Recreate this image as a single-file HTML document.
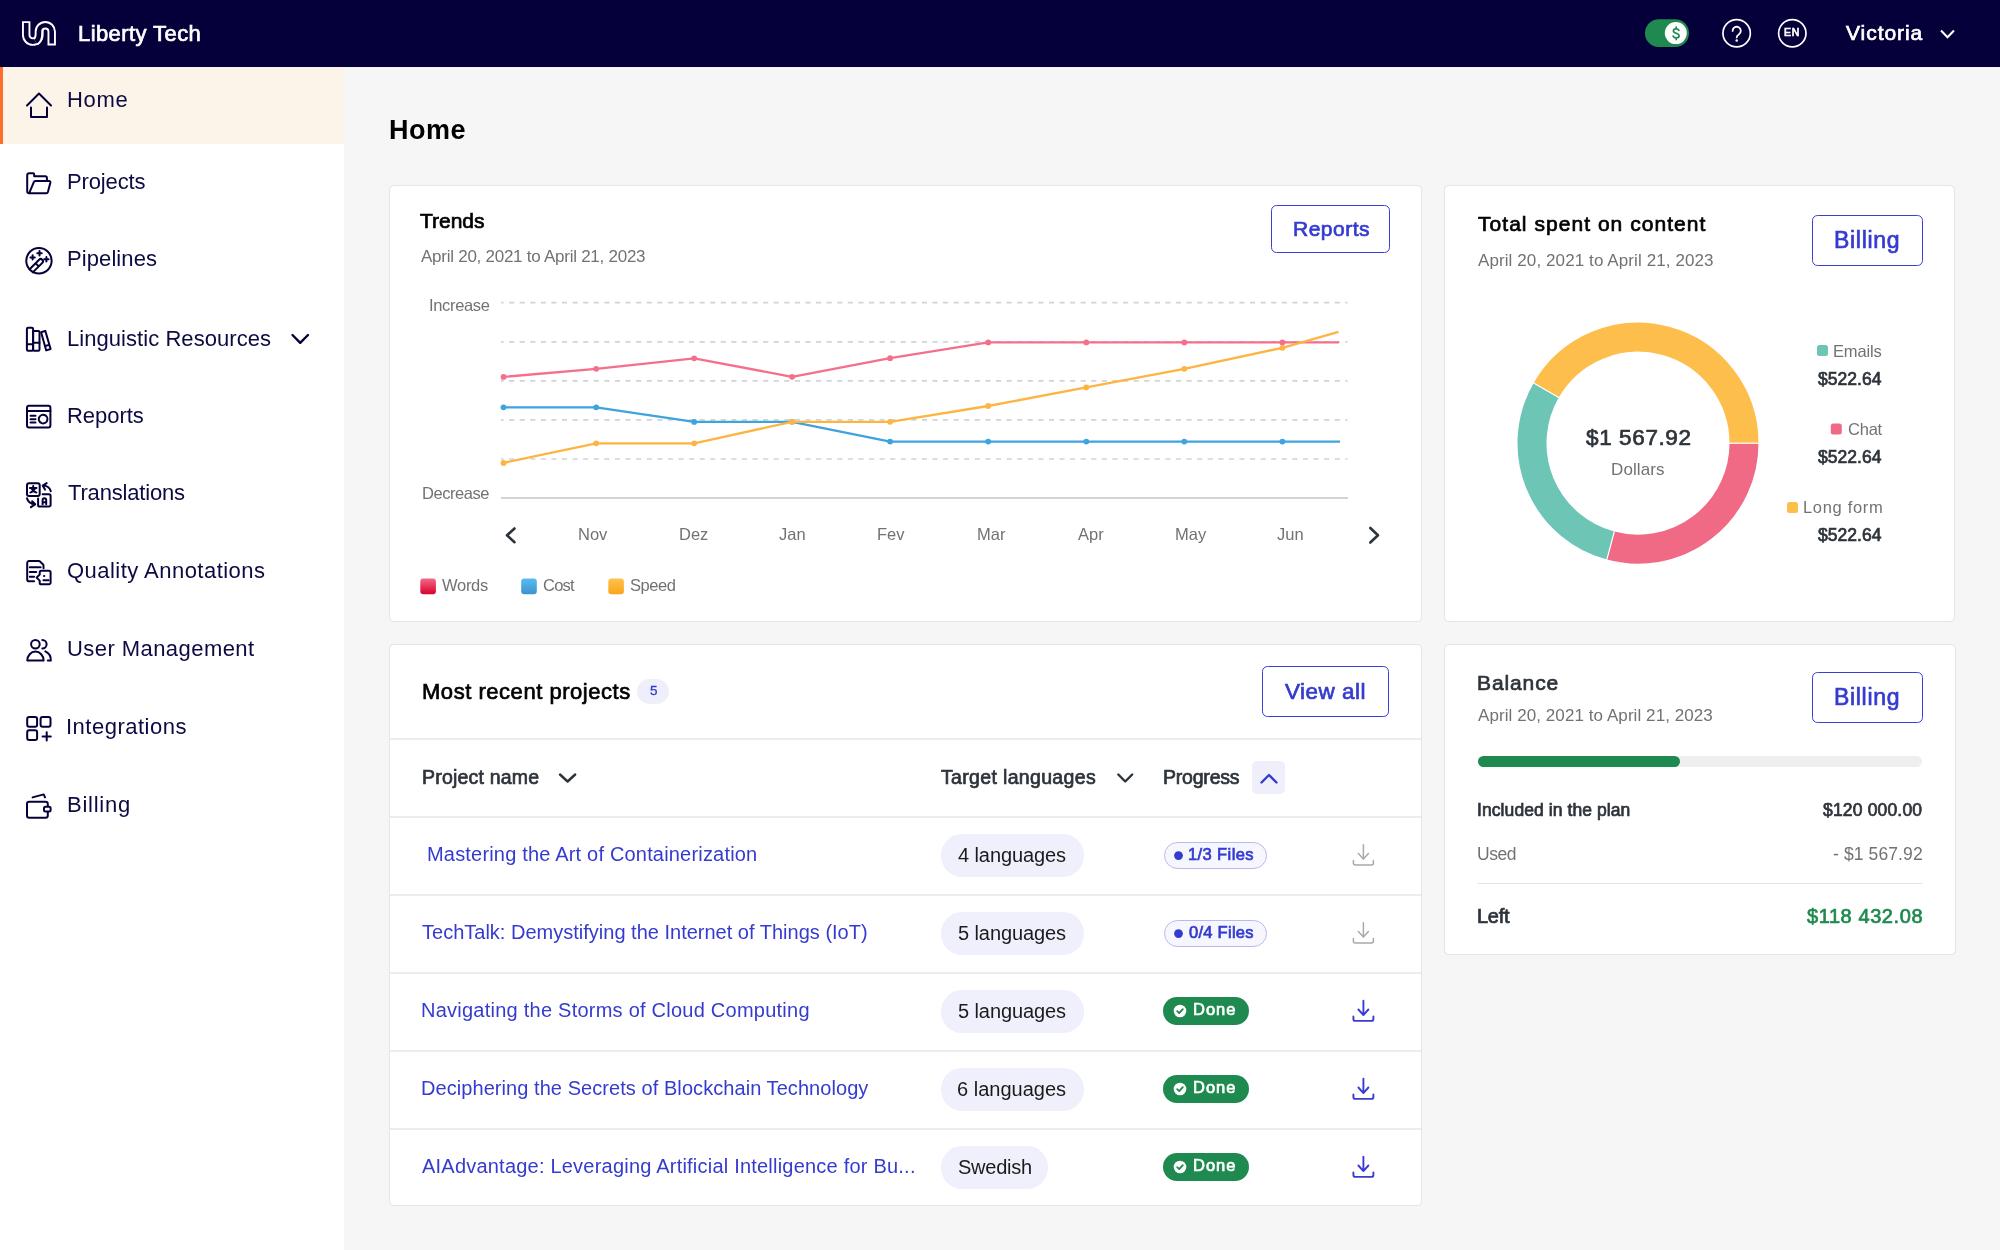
<!DOCTYPE html>
<html><head><meta charset="utf-8"><title>Liberty Tech - Home</title>
<style>
html,body{margin:0;padding:0;}
body{width:2000px;height:1250px;overflow:hidden;position:relative;background:#f6f6f6;font-family:"Liberation Sans", sans-serif;}
.t{position:absolute;white-space:nowrap;line-height:1;-webkit-font-smoothing:antialiased;will-change:transform;}
svg.ov{position:absolute;left:0;top:0;}
</style></head><body>
<div style="position:absolute;left:0px;top:0px;width:2000px;height:67px;background:#05003a;"></div><div style="position:absolute;left:0px;top:67px;width:344px;height:1183px;background:#fff;"></div><div style="position:absolute;left:0px;top:67px;width:344px;height:77px;background:#fcf3e9;"></div><div style="position:absolute;left:0px;top:67px;width:3px;height:77px;background:#fd6e2c;"></div><div style="position:absolute;left:389px;top:185px;width:1033px;height:437px;background:#fff;border:1px solid #e6e6e6;border-radius:5px;box-sizing:border-box;box-shadow:0 0 1px rgba(0,0,0,0.05);"></div><div style="position:absolute;left:1444px;top:185px;width:511px;height:437px;background:#fff;border:1px solid #e6e6e6;border-radius:5px;box-sizing:border-box;box-shadow:0 0 1px rgba(0,0,0,0.05);"></div><div style="position:absolute;left:389px;top:644px;width:1033px;height:562px;background:#fff;border:1px solid #e6e6e6;border-radius:5px;box-sizing:border-box;box-shadow:0 0 1px rgba(0,0,0,0.05);"></div><div style="position:absolute;left:1444px;top:644px;width:512px;height:311px;background:#fff;border:1px solid #e6e6e6;border-radius:5px;box-sizing:border-box;box-shadow:0 0 1px rgba(0,0,0,0.05);"></div><div style="position:absolute;left:1271px;top:205px;width:119px;height:48px;border:1.6px solid #3a3fd6;border-radius:5.5px;box-sizing:border-box;"></div><div style="position:absolute;left:1812px;top:215px;width:111px;height:51px;border:1.6px solid #3a3fd6;border-radius:5.5px;box-sizing:border-box;"></div><div style="position:absolute;left:637.4px;top:678.5px;width:31.7px;height:25.2px;background:#efeffc;border-radius:13px;"></div><div style="position:absolute;left:1262px;top:666px;width:127px;height:51px;border:1.6px solid #3a3fd6;border-radius:5.5px;box-sizing:border-box;"></div><div style="position:absolute;left:390px;top:738px;width:1031px;height:2px;background:#ececec;"></div><div style="position:absolute;left:390px;top:816px;width:1031px;height:2px;background:#ececec;"></div><div style="position:absolute;left:390px;top:894px;width:1031px;height:2px;background:#ececec;"></div><div style="position:absolute;left:390px;top:972px;width:1031px;height:2px;background:#ececec;"></div><div style="position:absolute;left:390px;top:1050px;width:1031px;height:2px;background:#ececec;"></div><div style="position:absolute;left:390px;top:1128px;width:1031px;height:2px;background:#ececec;"></div><div style="position:absolute;left:1252.4px;top:761px;width:33px;height:33px;background:#efeffc;border-radius:5px;"></div><div style="position:absolute;left:941px;top:834.3px;width:143px;height:42.4px;background:#f0f0fc;border-radius:21px;"></div><div style="position:absolute;left:1163.6px;top:841.6999999999999px;width:103.4px;height:27.4px;background:#f6f6fe;border:1.3px solid #b9b9f0;border-radius:14px;box-sizing:border-box;"></div><div style="position:absolute;left:941px;top:912.3px;width:143px;height:42.4px;background:#f0f0fc;border-radius:21px;"></div><div style="position:absolute;left:1163.6px;top:919.6999999999999px;width:103.4px;height:27.4px;background:#f6f6fe;border:1.3px solid #b9b9f0;border-radius:14px;box-sizing:border-box;"></div><div style="position:absolute;left:941px;top:990.3px;width:143px;height:42.4px;background:#f0f0fc;border-radius:21px;"></div><div style="position:absolute;left:1163.4px;top:997.0px;width:85.6px;height:28px;background:#1f8a4f;border-radius:14px;"></div><div style="position:absolute;left:941px;top:1068.3px;width:143px;height:42.4px;background:#f0f0fc;border-radius:21px;"></div><div style="position:absolute;left:1163.4px;top:1075.0px;width:85.6px;height:28px;background:#1f8a4f;border-radius:14px;"></div><div style="position:absolute;left:941px;top:1146.3px;width:107px;height:42.4px;background:#f0f0fc;border-radius:21px;"></div><div style="position:absolute;left:1163.4px;top:1153.0px;width:85.6px;height:28px;background:#1f8a4f;border-radius:14px;"></div><div style="position:absolute;left:1812px;top:672px;width:111px;height:51px;border:1.6px solid #3a3fd6;border-radius:5.5px;box-sizing:border-box;"></div><div style="position:absolute;left:1477.5px;top:756px;width:444.5px;height:11px;background:#efefef;border-radius:6px;"></div><div style="position:absolute;left:1477.5px;top:756px;width:202.5px;height:11px;background:#1f8a4f;border-radius:6px;"></div><div style="position:absolute;left:1477.5px;top:882.5px;width:444.5px;height:1.5px;background:#e3e3e3;"></div>
<svg class="ov" width="2000" height="1250" viewBox="0 0 2000 1250">
<path d="M26.2,21.2 V35 A6.6,6.6 0 0 0 39.4,35 V29" fill="none" stroke="#fff" stroke-width="8.4"/><path d="M26.2,23.1 V35 A6.6,6.6 0 0 0 39.4,35 V29" fill="none" stroke="#05003a" stroke-width="4.6"/><path d="M35.6,41.6 Q38.9,39.6 38.9,34 V31.6 A6.4,6.4 0 0 1 51.7,31.6 V45.4" fill="none" stroke="#fff" stroke-width="8.4"/><path d="M35.6,41.6 Q38.9,39.6 38.9,34 V31.6 A6.4,6.4 0 0 1 51.7,31.6 V43.5" fill="none" stroke="#05003a" stroke-width="4.6"/><rect x="1645" y="19.3" width="44" height="27.7" rx="13.85" fill="#1f8a4f"/><circle cx="1675.8" cy="33.1" r="11" fill="#fff"/><path d="M1678.9,30.4 C1678.4,29.2 1677.4,28.8 1676.2,28.8 C1674.6,28.8 1673.4,29.7 1673.4,31 C1673.4,33.9 1679.1,32.7 1679.1,35.8 C1679.1,37.1 1677.9,37.9 1676.2,37.9 C1674.8,37.9 1673.6,37.3 1673.1,36.1 M1676.2,27.2 V28.8 M1676.2,37.9 V39.6" fill="none" stroke="#1f8a4f" stroke-width="1.7" stroke-linecap="round"/><circle cx="1736.65" cy="33.25" r="13.7" fill="none" stroke="#fff" stroke-width="1.7"/><path d="M1732.6,30.9 A4.1,4.1 0 1 1 1738.8,34.4 C1737.4,35.2 1736.7,35.9 1736.7,37.4" fill="none" stroke="#fff" stroke-width="1.8" stroke-linecap="round"/><circle cx="1736.7" cy="40.4" r="1.25" fill="#fff"/><circle cx="1792.3" cy="33.25" r="13.7" fill="none" stroke="#fff" stroke-width="1.7"/><polyline points="1941,30.5 1947.5,37.2 1954,30.5" fill="none" stroke="#fff" stroke-width="2"/><polyline points="292.5,335 300.2,342.8 308,335" fill="none" stroke="#05003a" stroke-width="2.4" stroke-linecap="round" stroke-linejoin="round"/><polyline points="27,105.5 39,93.5 51,105.5" fill="none" stroke="#05003a" stroke-width="2" stroke-linejoin="round" stroke-linecap="round" stroke-linecap="butt"/><polyline points="31,107.5 31,117 47,117 47,107.5" fill="none" stroke="#05003a" stroke-width="2" stroke-linejoin="round" stroke-linecap="round" stroke-linejoin="miter" stroke-linecap="butt"/><path d="M29.2,193.2 A2,2 0 0 1 27.2,191.2 V175.2 A2,2 0 0 1 29.2,173.2 H33 A1.2,1.2 0 0 1 34.2,174.4 V176.2 H45.3 A1.6,1.6 0 0 1 46.9,177.8 V180.6" fill="none" stroke="#05003a" stroke-width="2" stroke-linejoin="round" stroke-linecap="round" stroke-width="1.9"/><path d="M35.3,181 H49.2 A1.3,1.3 0 0 1 50.4,182.6 L47.9,192 A1.7,1.7 0 0 1 46.3,193.2 H29.2 L33.8,182.2 A1.6,1.6 0 0 1 35.3,181 Z" fill="none" stroke="#05003a" stroke-width="2" stroke-linejoin="round" stroke-linecap="round" stroke-width="1.9"/><circle cx="38.95" cy="260.8" r="12.7" fill="none" stroke="#05003a" stroke-width="2" stroke-linejoin="round" stroke-linecap="round"/><path d="M29.6,269.2 L39.1,259.7 A2.26,2.26 0 0 1 42.3,262.9 L32.8,272.4 M35.6,263.2 L38.8,266.4" fill="none" stroke="#05003a" stroke-width="2" stroke-linejoin="round" stroke-linecap="round"/><path d="M32.6,255.2 V259.6 M30.4,257.4 H34.8 M39.5,251.1 V255.5 M37.3,253.3 H41.7 M46.4,257 V261.4 M44.2,259.2 H48.6" fill="none" stroke="#05003a" stroke-width="2" stroke-linejoin="round" stroke-linecap="round" stroke-width="1.6"/><rect x="26.9" y="327.7" width="6.2" height="23" rx="1.2" fill="none" stroke="#05003a" stroke-width="2" stroke-linejoin="round" stroke-linecap="round"/><rect x="33.1" y="331" width="6.4" height="19.7" rx="1.2" fill="none" stroke="#05003a" stroke-width="2" stroke-linejoin="round" stroke-linecap="round"/><path d="M26.9,344.3 H33.1 M33.1,342.7 H39.5" fill="none" stroke="#05003a" stroke-width="2" stroke-linejoin="round" stroke-linecap="round"/><path d="M41.1,332.3 L45.3,330.9 L50.6,349 L46.2,350.4 Z M44.9,346.1 L49.4,344.7" fill="none" stroke="#05003a" stroke-width="2" stroke-linejoin="round" stroke-linecap="round"/><rect x="27" y="405.8" width="23.4" height="21.6" rx="2" fill="none" stroke="#05003a" stroke-width="2" stroke-linejoin="round" stroke-linecap="round"/><path d="M27,410.9 H50.4 M30.5,415.7 H35.5 M30.5,419.2 H35.5 M30.5,422.6 H35.5" fill="none" stroke="#05003a" stroke-width="2" stroke-linejoin="round" stroke-linecap="round"/><circle cx="43.1" cy="419.1" r="4.3" fill="none" stroke="#05003a" stroke-width="2" stroke-linejoin="round" stroke-linecap="round" stroke-width="1.9" stroke-linecap="butt" stroke-dasharray="8 1.0" transform="rotate(-70 43.1 419.1)"/><rect x="27" y="483.3" width="12.7" height="12.6" rx="2" fill="none" stroke="#05003a" stroke-width="2" stroke-linejoin="round" stroke-linecap="round" stroke-width="1.8"/><path d="M29.9,488 H36.5 M33.2,486 V488 M30.3,492.6 Q33.6,491.8 35.2,488.2 M31.5,488.2 Q32.8,491.6 36.4,492.6" fill="none" stroke="#05003a" stroke-width="2" stroke-linejoin="round" stroke-linecap="round" stroke-width="1.3"/><path d="M42.6,494.3 H49 A1.6,1.6 0 0 1 50.6,495.9 V504.9 A1.6,1.6 0 0 1 49,506.5 H39.7 A1.6,1.6 0 0 1 38.1,504.9 V498.6" fill="none" stroke="#05003a" stroke-width="2" stroke-linejoin="round" stroke-linecap="round" stroke-width="1.8"/><path d="M42.6,504.2 V500.2 A1.8,2 0 0 1 46.2,500.2 V504.2 M42.6,502.2 H46.2" fill="none" stroke="#05003a" stroke-width="2" stroke-linejoin="round" stroke-linecap="round" stroke-width="1.3"/><path d="M50.8,491.2 Q49.2,485.8 42.7,485.6 M42.7,485.6 L46.7,483.1 M42.7,485.6 L45,489.6" fill="none" stroke="#05003a" stroke-width="2" stroke-linejoin="round" stroke-linecap="round" stroke-width="1.8"/><path d="M27,498.3 Q28.4,504 35.2,504.3 M35.2,504.3 L32.1,501.2 M35.2,504.3 L30.9,507.1" fill="none" stroke="#05003a" stroke-width="2" stroke-linejoin="round" stroke-linecap="round" stroke-width="1.8"/><path d="M43.5,568.3 V565.4 A1.5,1.5 0 0 0 43.1,564.4 L40,561.5 A1.5,1.5 0 0 0 39,561.1 H29 A1.8,1.8 0 0 0 27.2,562.9 V579.4 A1.8,1.8 0 0 0 29,581.2 H34.1" fill="none" stroke="#05003a" stroke-width="2" stroke-linejoin="round" stroke-linecap="round" stroke-width="1.8"/><path d="M29.8,567.3 H40.6 M29.8,572 H36.2 M29.8,576.8 H34.1" fill="none" stroke="#05003a" stroke-width="2" stroke-linejoin="round" stroke-linecap="round" stroke-width="1.8"/><path d="M41.3,570.8 H49 A1.6,1.6 0 0 1 50.6,572.4 V582.7 A1.6,1.6 0 0 1 49,584.3 H41.3 A1.6,1.6 0 0 1 39.7,582.7 V580.6 L36.6,577.6 L39.7,574.5 V572.4 A1.6,1.6 0 0 1 41.3,570.8 Z" fill="none" stroke="#05003a" stroke-width="2" stroke-linejoin="round" stroke-linecap="round" stroke-width="1.8"/><path d="M44,576.1 H44.3 M43.4,580.3 H48.6" fill="none" stroke="#05003a" stroke-width="2" stroke-linejoin="round" stroke-linecap="round" stroke-width="1.8"/><circle cx="35.4" cy="644.3" r="4.3" fill="none" stroke="#05003a" stroke-width="2" stroke-linejoin="round" stroke-linecap="round" stroke-width="1.9"/><path d="M27.3,660.6 A8.15,9 0 0 1 43.6,660.6 Z" fill="none" stroke="#05003a" stroke-width="2" stroke-linejoin="round" stroke-linecap="round" stroke-width="1.9"/><path d="M42.3,640 A4.3,4.3 0 0 1 42.3,648.6 M45.3,651.4 A9.5,9.5 0 0 1 50.8,660.6 H47.8" fill="none" stroke="#05003a" stroke-width="2" stroke-linejoin="round" stroke-linecap="round" stroke-width="1.9"/><rect x="27.2" y="716.9" width="9.9" height="9.9" rx="2" fill="none" stroke="#05003a" stroke-width="2" stroke-linejoin="round" stroke-linecap="round"/><rect x="40.6" y="716.9" width="9.9" height="9.9" rx="2" fill="none" stroke="#05003a" stroke-width="2" stroke-linejoin="round" stroke-linecap="round"/><rect x="27.2" y="730.2" width="9.9" height="9.9" rx="2" fill="none" stroke="#05003a" stroke-width="2" stroke-linejoin="round" stroke-linecap="round"/><path d="M46.7,732.3 V740.5 M42.6,736.4 H50.8" fill="none" stroke="#05003a" stroke-width="2" stroke-linejoin="round" stroke-linecap="round" stroke-width="2"/><rect x="27" y="801.8" width="20.8" height="15.9" rx="2.2" fill="none" stroke="#05003a" stroke-width="2" stroke-linejoin="round" stroke-linecap="round"/><rect x="44" y="806.8" width="6.6" height="4.6" rx="1.5" fill="#fff" stroke="#05003a" stroke-width="2"/><path d="M32.6,797.4 L43.7,794.4 L45,797.4" fill="none" stroke="#05003a" stroke-width="2" stroke-linejoin="round" stroke-linecap="round"/><line x1="501" y1="302.7" x2="1347.5" y2="302.7" stroke="#d2d3d6" stroke-width="1.7" stroke-dasharray="5.1 5.485" stroke-dashoffset="2.5"/><line x1="501" y1="341.8" x2="1347.5" y2="341.8" stroke="#d2d3d6" stroke-width="1.7" stroke-dasharray="5.1 5.485" stroke-dashoffset="2.5"/><line x1="501" y1="380.9" x2="1347.5" y2="380.9" stroke="#d2d3d6" stroke-width="1.7" stroke-dasharray="5.1 5.485" stroke-dashoffset="2.5"/><line x1="501" y1="419.9" x2="1347.5" y2="419.9" stroke="#d2d3d6" stroke-width="1.7" stroke-dasharray="5.1 5.485" stroke-dashoffset="2.5"/><line x1="501" y1="459" x2="1347.5" y2="459" stroke="#d2d3d6" stroke-width="1.7" stroke-dasharray="5.1 5.485" stroke-dashoffset="2.5"/><line x1="501" y1="498" x2="1348" y2="498" stroke="#d3d3d3" stroke-width="2"/><polyline points="503.5,376.9 596.2,368.8 694.2,358.3 792.1,376.8 890.1,358.2 988.2,342.4 1086.3,342.4 1184.3,342.4 1282.4,342.4 1339,342.4" fill="none" stroke="#f56f8a" stroke-width="2.3" stroke-linejoin="round"/><circle cx="503.5" cy="376.9" r="2.9" fill="#f56f8a"/><circle cx="596.2" cy="368.8" r="2.9" fill="#f56f8a"/><circle cx="694.2" cy="358.3" r="2.9" fill="#f56f8a"/><circle cx="792.1" cy="376.8" r="2.9" fill="#f56f8a"/><circle cx="890.1" cy="358.2" r="2.9" fill="#f56f8a"/><circle cx="988.2" cy="342.4" r="2.9" fill="#f56f8a"/><circle cx="1086.3" cy="342.4" r="2.9" fill="#f56f8a"/><circle cx="1184.3" cy="342.4" r="2.9" fill="#f56f8a"/><circle cx="1282.4" cy="342.4" r="2.9" fill="#f56f8a"/><polyline points="503.5,407.3 596.2,407.3 694.2,421.9 792.1,421.8 890.1,441.6 988.2,441.6 1086.3,441.6 1184.3,441.6 1282.4,441.6 1340,441.6" fill="none" stroke="#3fa3dd" stroke-width="2.3" stroke-linejoin="round"/><circle cx="503.5" cy="407.3" r="2.9" fill="#3fa3dd"/><circle cx="596.2" cy="407.3" r="2.9" fill="#3fa3dd"/><circle cx="694.2" cy="421.9" r="2.9" fill="#3fa3dd"/><circle cx="792.1" cy="421.8" r="2.9" fill="#3fa3dd"/><circle cx="890.1" cy="441.6" r="2.9" fill="#3fa3dd"/><circle cx="988.2" cy="441.6" r="2.9" fill="#3fa3dd"/><circle cx="1086.3" cy="441.6" r="2.9" fill="#3fa3dd"/><circle cx="1184.3" cy="441.6" r="2.9" fill="#3fa3dd"/><circle cx="1282.4" cy="441.6" r="2.9" fill="#3fa3dd"/><polyline points="503.5,462.9 596.2,443.3 694.2,443.3 792.1,421.8 890.1,421.8 988.2,406 1086.3,387.4 1184.3,368.8 1282.4,347.8 1338.5,331.9" fill="none" stroke="#fdb440" stroke-width="2.3" stroke-linejoin="round"/><circle cx="503.5" cy="462.9" r="2.9" fill="#fdb440"/><circle cx="596.2" cy="443.3" r="2.9" fill="#fdb440"/><circle cx="694.2" cy="443.3" r="2.9" fill="#fdb440"/><circle cx="792.1" cy="421.8" r="2.9" fill="#fdb440"/><circle cx="890.1" cy="421.8" r="2.9" fill="#fdb440"/><circle cx="988.2" cy="406" r="2.9" fill="#fdb440"/><circle cx="1086.3" cy="387.4" r="2.9" fill="#fdb440"/><circle cx="1184.3" cy="368.8" r="2.9" fill="#fdb440"/><circle cx="1282.4" cy="347.8" r="2.9" fill="#fdb440"/><polyline points="514.5,528.5 507,535.3 514.5,542.2" fill="none" stroke="#2d333a" stroke-width="2.6" stroke-linecap="round" stroke-linejoin="round"/><polyline points="1370.3,528 1378,535.3 1370.3,542.5" fill="none" stroke="#2d333a" stroke-width="2.6" stroke-linecap="round" stroke-linejoin="round"/><defs><linearGradient id="gw" x1="0" y1="0" x2="0" y2="1"><stop offset="0" stop-color="#f26a85"/><stop offset="1" stop-color="#d9002c"/></linearGradient><linearGradient id="gc" x1="0" y1="0" x2="0" y2="1"><stop offset="0" stop-color="#5bbaf2"/><stop offset="1" stop-color="#3b95cb"/></linearGradient><linearGradient id="gs" x1="0" y1="0" x2="0" y2="1"><stop offset="0" stop-color="#fec34c"/><stop offset="1" stop-color="#f9a51d"/></linearGradient></defs><rect x="420.3" y="578.6" width="15.6" height="15.6" rx="3" fill="url(#gw)"/><rect x="521.2" y="578.6" width="15.6" height="15.6" rx="3" fill="url(#gc)"/><rect x="608.3" y="578.6" width="15.6" height="15.6" rx="3" fill="url(#gs)"/><path d="M1546.20,390.20 A106,106 0 0 1 1744.00,443.20" fill="none" stroke="#fdbe4c" stroke-width="29"/><path d="M1744.00,443.20 A106,106 0 0 1 1610.57,545.59" fill="none" stroke="#f06a86" stroke-width="29"/><path d="M1610.57,545.59 A106,106 0 0 1 1546.20,390.20" fill="none" stroke="#6dc6b5" stroke-width="29"/><line x1="1559.62" y1="397.95" x2="1532.78" y2="382.45" stroke="#fff" stroke-width="1.2"/><line x1="1728.50" y1="443.20" x2="1759.50" y2="443.20" stroke="#fff" stroke-width="1.2"/><line x1="1614.58" y1="530.62" x2="1606.55" y2="560.56" stroke="#fff" stroke-width="1.2"/><rect x="1817" y="345" width="11" height="11" rx="2.5" fill="#6dc6b5"/><rect x="1830.8" y="423.4" width="11" height="11" rx="2.5" fill="#f06a86"/><rect x="1787" y="502" width="11" height="11" rx="2.5" fill="#fdbe4c"/><polyline points="560,774.5 567.6,781.5 575.2,774.5" fill="none" stroke="#2d333a" stroke-width="2.4" stroke-linecap="round" stroke-linejoin="round"/><polyline points="1118.3,774.5 1125.2,781.5 1132.2,774.5" fill="none" stroke="#2d333a" stroke-width="2.4" stroke-linecap="round" stroke-linejoin="round"/><polyline points="1261.5,782.5 1269,775 1276.5,782.5" fill="none" stroke="#353bcf" stroke-width="2.4" stroke-linecap="round" stroke-linejoin="round"/><circle cx="1178.5" cy="855.5999999999999" r="4.4" fill="#353bcf"/><path d="M1363.4,844.8 V859.0999999999999 M1358.4,853.5 L1363.4,859.0999999999999 L1368.4,853.5" fill="none" stroke="#a9a9a9" stroke-width="1.5" stroke-linecap="round" stroke-linejoin="round"/><path d="M1353.4,860.5 V862.9 A2,2 0 0 0 1355.4,864.9 H1371.4 A2,2 0 0 0 1373.4,862.9 V860.5" fill="none" stroke="#a9a9a9" stroke-width="1.5" stroke-linecap="round" stroke-linejoin="round"/><circle cx="1178.5" cy="933.5999999999999" r="4.4" fill="#353bcf"/><path d="M1363.4,922.8 V937.0999999999999 M1358.4,931.5 L1363.4,937.0999999999999 L1368.4,931.5" fill="none" stroke="#a9a9a9" stroke-width="1.5" stroke-linecap="round" stroke-linejoin="round"/><path d="M1353.4,938.5 V940.9 A2,2 0 0 0 1355.4,942.9 H1371.4 A2,2 0 0 0 1373.4,940.9 V938.5" fill="none" stroke="#a9a9a9" stroke-width="1.5" stroke-linecap="round" stroke-linejoin="round"/><circle cx="1180" cy="1011.0" r="6.3" fill="#fff"/><polyline points="1177.2,1011.0999999999999 1179.2,1013.0999999999999 1182.8,1009.0999999999999" fill="none" stroke="#1f8a4f" stroke-width="1.8" stroke-linecap="round" stroke-linejoin="round"/><path d="M1363.4,1000.8 V1015.0999999999999 M1358.4,1009.5 L1363.4,1015.0999999999999 L1368.4,1009.5" fill="none" stroke="#3b3bd2" stroke-width="1.9" stroke-linecap="round" stroke-linejoin="round"/><path d="M1353.4,1016.5 V1018.9 A2,2 0 0 0 1355.4,1020.9 H1371.4 A2,2 0 0 0 1373.4,1018.9 V1016.5" fill="none" stroke="#3b3bd2" stroke-width="1.9" stroke-linecap="round" stroke-linejoin="round"/><circle cx="1180" cy="1089.0" r="6.3" fill="#fff"/><polyline points="1177.2,1089.1 1179.2,1091.1 1182.8,1087.1" fill="none" stroke="#1f8a4f" stroke-width="1.8" stroke-linecap="round" stroke-linejoin="round"/><path d="M1363.4,1078.8 V1093.1 M1358.4,1087.5 L1363.4,1093.1 L1368.4,1087.5" fill="none" stroke="#3b3bd2" stroke-width="1.9" stroke-linecap="round" stroke-linejoin="round"/><path d="M1353.4,1094.5 V1096.8999999999999 A2,2 0 0 0 1355.4,1098.8999999999999 H1371.4 A2,2 0 0 0 1373.4,1096.8999999999999 V1094.5" fill="none" stroke="#3b3bd2" stroke-width="1.9" stroke-linecap="round" stroke-linejoin="round"/><circle cx="1180" cy="1167.0" r="6.3" fill="#fff"/><polyline points="1177.2,1167.1 1179.2,1169.1 1182.8,1165.1" fill="none" stroke="#1f8a4f" stroke-width="1.8" stroke-linecap="round" stroke-linejoin="round"/><path d="M1363.4,1156.8 V1171.1 M1358.4,1165.5 L1363.4,1171.1 L1368.4,1165.5" fill="none" stroke="#3b3bd2" stroke-width="1.9" stroke-linecap="round" stroke-linejoin="round"/><path d="M1353.4,1172.5 V1174.8999999999999 A2,2 0 0 0 1355.4,1176.8999999999999 H1371.4 A2,2 0 0 0 1373.4,1174.8999999999999 V1172.5" fill="none" stroke="#3b3bd2" stroke-width="1.9" stroke-linecap="round" stroke-linejoin="round"/>
</svg>
<div class="t" style="left:77.75px;top:22.5px;font-size:22px;font-weight:400;color:#fff;letter-spacing:0.420px;-webkit-text-stroke:0.7px #fff;">Liberty Tech</div><div class="t" style="left:1783.50px;top:26.799999999999997px;font-size:10.5px;font-weight:400;color:#fff;letter-spacing:0.697px;-webkit-text-stroke:0.7px #fff;">EN</div><div class="t" style="left:1846.40px;top:22px;font-size:21px;font-weight:400;color:#fff;letter-spacing:0.948px;-webkit-text-stroke:0.7px #fff;">Victoria</div><div class="t" style="left:67.00px;top:88.7px;font-size:22px;font-weight:400;color:#0c0a42;letter-spacing:0.684px;">Home</div><div class="t" style="left:67.00px;top:170.8px;font-size:22px;font-weight:400;color:#0c0a42;letter-spacing:-0.139px;">Projects</div><div class="t" style="left:67.00px;top:248px;font-size:22px;font-weight:400;color:#0c0a42;letter-spacing:0.090px;">Pipelines</div><div class="t" style="left:67.00px;top:328.4px;font-size:22px;font-weight:400;color:#0c0a42;letter-spacing:0.053px;">Linguistic Resources</div><div class="t" style="left:67.00px;top:404.8px;font-size:22px;font-weight:400;color:#0c0a42;letter-spacing:-0.039px;">Reports</div><div class="t" style="left:68.00px;top:482px;font-size:22px;font-weight:400;color:#0c0a42;letter-spacing:-0.183px;">Translations</div><div class="t" style="left:67.00px;top:560px;font-size:22px;font-weight:400;color:#0c0a42;letter-spacing:0.468px;">Quality Annotations</div><div class="t" style="left:67.00px;top:637.8px;font-size:22px;font-weight:400;color:#0c0a42;letter-spacing:0.438px;">User Management</div><div class="t" style="left:66.00px;top:716.3px;font-size:22px;font-weight:400;color:#0c0a42;letter-spacing:0.494px;">Integrations</div><div class="t" style="left:67.00px;top:793.6px;font-size:22px;font-weight:400;color:#0c0a42;letter-spacing:0.757px;">Billing</div><div class="t" style="left:389.00px;top:116.80000000000001px;font-size:27px;font-weight:700;color:#000;letter-spacing:0.500px;">Home</div><div class="t" style="left:420.30px;top:210.1px;font-size:21px;font-weight:400;color:#000;letter-spacing:-0.016px;-webkit-text-stroke:0.7px #000;">Trends</div><div class="t" style="left:420.50px;top:247.89999999999998px;font-size:17px;font-weight:400;color:#727272;letter-spacing:-0.257px;">April 20, 2021 to April 21, 2023</div><div class="t" style="left:1292.50px;top:218.2px;font-size:21px;font-weight:400;color:#353bcf;letter-spacing:0.495px;-webkit-text-stroke:0.7px #353bcf;">Reports</div><div class="t" style="left:429.00px;top:296.5px;font-size:16.5px;font-weight:400;color:#727272;letter-spacing:-0.344px;">Increase</div><div class="t" style="left:421.90px;top:485.3px;font-size:16.5px;font-weight:400;color:#727272;letter-spacing:-0.449px;">Decrease</div><div class="t" style="left:578.45px;top:525.6px;font-size:16.5px;font-weight:400;color:#727272;letter-spacing:0.000px;">Nov</div><div class="t" style="left:678.65px;top:525.6px;font-size:16.5px;font-weight:400;color:#727272;letter-spacing:0.000px;">Dez</div><div class="t" style="left:779.49px;top:525.6px;font-size:16.5px;font-weight:400;color:#727272;letter-spacing:0.000px;">Jan</div><div class="t" style="left:877.37px;top:525.6px;font-size:16.5px;font-weight:400;color:#727272;letter-spacing:0.000px;">Fev</div><div class="t" style="left:977.14px;top:525.6px;font-size:16.5px;font-weight:400;color:#727272;letter-spacing:0.000px;">Mar</div><div class="t" style="left:1078.21px;top:525.6px;font-size:16.5px;font-weight:400;color:#727272;letter-spacing:0.000px;">Apr</div><div class="t" style="left:1174.54px;top:525.6px;font-size:16.5px;font-weight:400;color:#727272;letter-spacing:0.000px;">May</div><div class="t" style="left:1276.99px;top:525.6px;font-size:16.5px;font-weight:400;color:#727272;letter-spacing:0.000px;">Jun</div><div class="t" style="left:441.90px;top:577.1px;font-size:16.5px;font-weight:400;color:#727272;letter-spacing:-0.281px;">Words</div><div class="t" style="left:543.00px;top:577.1px;font-size:16.5px;font-weight:400;color:#727272;letter-spacing:-0.781px;">Cost</div><div class="t" style="left:630.10px;top:577.1px;font-size:16.5px;font-weight:400;color:#727272;letter-spacing:-0.434px;">Speed</div><div class="t" style="left:1478.20px;top:212.7px;font-size:21px;font-weight:400;color:#000;letter-spacing:1.041px;-webkit-text-stroke:0.7px #000;">Total spent on content</div><div class="t" style="left:1478.20px;top:252.3px;font-size:17px;font-weight:400;color:#727272;letter-spacing:0.097px;">April 20, 2021 to April 21, 2023</div><div class="t" style="left:1834.20px;top:229.1px;font-size:23px;font-weight:400;color:#353bcf;letter-spacing:0.705px;-webkit-text-stroke:0.7px #353bcf;">Billing</div><div class="t" style="left:1585.55px;top:426.7px;font-size:22.5px;font-weight:400;color:#2d333a;letter-spacing:0.615px;-webkit-text-stroke:0.7px #2d333a;">$1 567.92</div><div class="t" style="left:1610.60px;top:460.6px;font-size:17px;font-weight:400;color:#727272;letter-spacing:0.100px;">Dollars</div><div class="t" style="left:1833.40px;top:342.8px;font-size:16.5px;font-weight:400;color:#727272;letter-spacing:-0.132px;">Emails</div><div class="t" style="left:1818.30px;top:371.4px;font-size:17.5px;font-weight:400;color:#2d333a;letter-spacing:0.029px;-webkit-text-stroke:0.7px #2d333a;">$522.64</div><div class="t" style="left:1848.20px;top:421.1px;font-size:16.5px;font-weight:400;color:#727272;letter-spacing:-0.223px;">Chat</div><div class="t" style="left:1818.30px;top:448.9px;font-size:17.5px;font-weight:400;color:#2d333a;letter-spacing:0.029px;-webkit-text-stroke:0.7px #2d333a;">$522.64</div><div class="t" style="left:1803.00px;top:499.1px;font-size:16.5px;font-weight:400;color:#727272;letter-spacing:0.682px;">Long form</div><div class="t" style="left:1818.30px;top:526.9px;font-size:17.5px;font-weight:400;color:#2d333a;letter-spacing:0.029px;-webkit-text-stroke:0.7px #2d333a;">$522.64</div><div class="t" style="left:421.90px;top:681.3px;font-size:22px;font-weight:400;color:#000;letter-spacing:0.533px;-webkit-text-stroke:0.7px #000;">Most recent projects</div><div class="t" style="left:649.60px;top:683.7px;font-size:13.5px;font-weight:400;color:#353bcf;letter-spacing:0.000px;-webkit-text-stroke:0.3px #353bcf;">5</div><div class="t" style="left:1284.70px;top:680.8px;font-size:22.5px;font-weight:400;color:#353bcf;letter-spacing:0.482px;-webkit-text-stroke:0.7px #353bcf;">View all</div><div class="t" style="left:421.90px;top:768.3px;font-size:19.5px;font-weight:400;color:#2d333a;letter-spacing:0.196px;-webkit-text-stroke:0.7px #2d333a;">Project name</div><div class="t" style="left:941.10px;top:768.4px;font-size:19.5px;font-weight:400;color:#2d333a;letter-spacing:0.336px;-webkit-text-stroke:0.7px #2d333a;">Target languages</div><div class="t" style="left:1163.20px;top:768.4px;font-size:19.5px;font-weight:400;color:#2d333a;letter-spacing:-0.211px;-webkit-text-stroke:0.7px #2d333a;">Progress</div><div class="t" style="left:427.00px;top:843.8px;font-size:20px;font-weight:400;color:#353bcf;letter-spacing:0.186px;">Mastering the Art of Containerization</div><div class="t" style="left:958.30px;top:844.8px;font-size:20px;font-weight:400;color:#1b1b1b;letter-spacing:-0.088px;">4 languages</div><div class="t" style="left:1188.40px;top:845.5px;font-size:16.5px;font-weight:400;color:#353bcf;letter-spacing:0.399px;-webkit-text-stroke:0.7px #353bcf;">1/3 Files</div><div class="t" style="left:422.00px;top:921.8px;font-size:20px;font-weight:400;color:#353bcf;letter-spacing:0.005px;">TechTalk: Demystifying the Internet of Things (IoT)</div><div class="t" style="left:958.30px;top:922.8px;font-size:20px;font-weight:400;color:#1b1b1b;letter-spacing:-0.088px;">5 languages</div><div class="t" style="left:1189.40px;top:923.5px;font-size:16.5px;font-weight:400;color:#353bcf;letter-spacing:0.274px;-webkit-text-stroke:0.7px #353bcf;">0/4 Files</div><div class="t" style="left:421.00px;top:999.8px;font-size:20px;font-weight:400;color:#353bcf;letter-spacing:0.242px;">Navigating the Storms of Cloud Computing</div><div class="t" style="left:958.30px;top:1000.8px;font-size:20px;font-weight:400;color:#1b1b1b;letter-spacing:-0.088px;">5 languages</div><div class="t" style="left:1193.40px;top:1001.4px;font-size:16.5px;font-weight:400;color:#fff;letter-spacing:0.977px;-webkit-text-stroke:0.7px #fff;">Done</div><div class="t" style="left:421.00px;top:1077.8px;font-size:20px;font-weight:400;color:#353bcf;letter-spacing:0.064px;">Deciphering the Secrets of Blockchain Technology</div><div class="t" style="left:957.30px;top:1078.8px;font-size:20px;font-weight:400;color:#1b1b1b;letter-spacing:0.012px;">6 languages</div><div class="t" style="left:1193.40px;top:1079.3999999999999px;font-size:16.5px;font-weight:400;color:#fff;letter-spacing:0.977px;-webkit-text-stroke:0.7px #fff;">Done</div><div class="t" style="left:422.00px;top:1155.8px;font-size:20px;font-weight:400;color:#353bcf;letter-spacing:0.215px;">AIAdvantage: Leveraging Artificial Intelligence for Bu...</div><div class="t" style="left:958.30px;top:1156.8px;font-size:20px;font-weight:400;color:#1b1b1b;letter-spacing:-0.245px;">Swedish</div><div class="t" style="left:1193.40px;top:1157.3999999999999px;font-size:16.5px;font-weight:400;color:#fff;letter-spacing:0.977px;-webkit-text-stroke:0.7px #fff;">Done</div><div class="t" style="left:1477.20px;top:672.2px;font-size:21px;font-weight:400;color:#2d333a;letter-spacing:0.898px;-webkit-text-stroke:0.7px #2d333a;">Balance</div><div class="t" style="left:1478.20px;top:706.6px;font-size:17px;font-weight:400;color:#727272;letter-spacing:0.075px;">April 20, 2021 to April 21, 2023</div><div class="t" style="left:1834.20px;top:685.5px;font-size:23px;font-weight:400;color:#353bcf;letter-spacing:0.688px;-webkit-text-stroke:0.7px #353bcf;">Billing</div><div class="t" style="left:1477.20px;top:801.5px;font-size:17.5px;font-weight:400;color:#2d333a;letter-spacing:0.082px;-webkit-text-stroke:0.7px #2d333a;">Included in the plan</div><div class="t" style="left:1822.70px;top:801.5px;font-size:17.5px;font-weight:400;color:#2d333a;letter-spacing:0.171px;-webkit-text-stroke:0.7px #2d333a;">$120 000.00</div><div class="t" style="left:1477.20px;top:845.7px;font-size:17.5px;font-weight:400;color:#727272;letter-spacing:-0.440px;">Used</div><div class="t" style="left:1833.10px;top:845.7px;font-size:17.5px;font-weight:400;color:#727272;letter-spacing:0.109px;">- $1 567.92</div><div class="t" style="left:1477.20px;top:905.9px;font-size:20px;font-weight:400;color:#2d333a;letter-spacing:-0.268px;-webkit-text-stroke:0.7px #2d333a;">Left</div><div class="t" style="left:1806.60px;top:905.9px;font-size:20px;font-weight:400;color:#1f8a4f;letter-spacing:0.579px;-webkit-text-stroke:0.7px #1f8a4f;">$118 432.08</div>
</body></html>
